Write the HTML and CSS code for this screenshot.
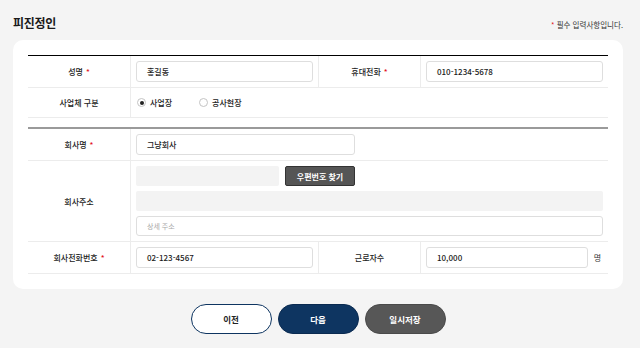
FILE: index.html
```html
<!DOCTYPE html>
<html lang="ko">
<head>
<meta charset="utf-8">
<title>피진정인</title>
<link rel="stylesheet" href="styles.css">
</head>
<body>
<div class="page">
  <div class="header">
    <h1 class="title">피진정인</h1>
    <p class="note"><span class="req">*</span> 필수 입력사항입니다.</p>
  </div>
  <div class="card">
    <div class="tbl tbl-top">
      <div class="th">성명 <span class="req">*</span></div>
      <div class="td"><div class="input">홍길동</div></div>
      <div class="th bl">휴대전화 <span class="req">*</span></div>
      <div class="td"><div class="input">010-1234-5678</div></div>

      <div class="th">사업체 구분</div>
      <div class="td span3 radios">
        <label class="radio"><span class="dot checked"></span>사업장</label>
        <label class="radio"><span class="dot"></span>공사현장</label>
      </div>
    </div>

    <div class="tbl tbl-second">
      <div class="th">회사명 <span class="req">*</span></div>
      <div class="td span3"><div class="input w-name">그냥회사</div></div>

      <div class="th">회사주소</div>
      <div class="td span3 addr">
        <div class="addr-line">
          <div class="box box-post"></div>
          <button class="btn-post" type="button">우편번호 찾기</button>
        </div>
        <div class="box box-full"></div>
        <div class="input input-sm placeholder">상세 주소</div>
      </div>

      <div class="th">회사전화번호 <span class="req">*</span></div>
      <div class="td"><div class="input">02-123-4567</div></div>
      <div class="th bl">근로자수</div>
      <div class="td unit-cell"><div class="input grow">10,000</div><span class="unit">명</span></div>
    </div>
  </div>
  <div class="actions">
    <button class="btn btn-prev" type="button">이전</button>
    <button class="btn btn-next" type="button">다음</button>
    <button class="btn btn-save" type="button">일시저장</button>
  </div>
</div>
</body>
</html>
```
FILE: styles.css
```css
* { box-sizing: border-box; }
html, body { margin: 0; padding: 0; }
body {
  background: #f4f4f4;
  font-family: "Noto Sans CJK KR", "Noto Sans", sans-serif;
  color: #222;
  width: 640px;
  height: 348px;
  overflow: hidden;
}
.page { padding: 0 17px 0 13px; }
.header {
  height: 40px;
  padding-top: 4px;
  display: flex;
  align-items: center;
  justify-content: space-between;
}
.title {
  margin: 0;
  font-size: 12px;
  font-weight: 700;
  color: #1a1a1a;
  letter-spacing: -0.3px;
}
.note {
  margin: 4px 0 0;
  font-size: 7.5px;
  color: #333;
}
.req { color: #e3141d; }
.card {
  background: #fff;
  border-radius: 10px;
  padding: 15px;
}
.tbl {
  display: grid;
  grid-template-columns: 102px 188px 102px 188px;
}
.tbl-top { border-top: 1px solid #000; }
.tbl-second { border-top: 2px solid #9a9a9a; margin-top: 9px; }
.th {
  display: flex;
  align-items: center;
  justify-content: center;
  gap: 3px;
  font-size: 8px;
  font-weight: 500;
  color: #222;
  border-bottom: 1px solid #ececec;
}
.bl { border-left: 1px solid #ececec; }
.td {
  display: flex;
  align-items: center;
  padding: 5px;
  border-bottom: 1px solid #ececec;
  border-left: 1px solid #ececec;
  min-height: 30px;
}
.span3 { grid-column: span 3; }
.input {
  width: 100%;
  height: 21px;
  border: 1px solid #dedede;
  border-radius: 3px;
  padding: 0 10px;
  font-size: 8px;
  font-weight: 500;
  color: #1a1a1a;
  display: flex;
  align-items: center;
  background: #fff;
}
.w-name { width: 219px; }
.input-sm { height: 20px; }
.placeholder { color: #a8a8a8; font-size: 7px; font-weight: 400; }
.radios { gap: 26px; }
.radio {
  display: flex;
  align-items: center;
  gap: 4px;
  font-size: 8px;
  font-weight: 500;
  color: #222;
}
.dot {
  width: 9px;
  height: 9px;
  border: 1px solid #c4c4c4;
  border-radius: 50%;
  display: flex;
  align-items: center;
  justify-content: center;
  margin-left: 1px;
}
.dot.checked::after {
  content: "";
  width: 4px;
  height: 4px;
  border-radius: 50%;
  background: #222;
}
.addr {
  flex-direction: column;
  align-items: stretch;
  gap: 5px;
}
.addr-line { display: flex; gap: 6px; }
.box {
  height: 20px;
  background: #f3f3f3;
  border-radius: 2px;
}
.box-post { width: 143px; }
.btn-post {
  width: 70px;
  height: 20px;
  background: #555;
  border: 1px solid #333;
  border-radius: 2px;
  color: #fff;
  font-family: inherit;
  font-size: 8px;
  font-weight: 700;
  padding: 0;
}
.unit-cell { gap: 6px; }
.grow { flex: 1; width: auto; }
.unit { font-size: 8px; color: #333; margin-right: 2px; }
.actions {
  display: flex;
  justify-content: center;
  gap: 6px;
  margin-top: 15px;
}
.btn {
  width: 81px;
  height: 30px;
  border-radius: 15px;
  font-family: inherit;
  font-size: 8.5px;
  font-weight: 700;
  padding: 0;
  border: 1px solid transparent;
}
.btn-prev { background: #fff; border-color: #0e3561; color: #222; }
.btn-next { background: #0e3561; border-color: #0a2a50; color: #fff; }
.btn-save { background: #575757; border-color: #4a4a4a; color: #fff; }
```
